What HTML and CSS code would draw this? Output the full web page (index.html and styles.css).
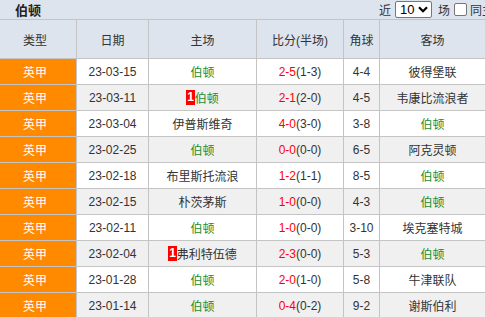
FILE: index.html
```html
<!DOCTYPE html>
<html lang="zh">
<head>
<meta charset="utf-8">
<link rel="stylesheet" href="styles.css">
</head>
<body>
<div class="wrap">
  <div class="topbar">
    <div class="title">伯顿</div>
    <div class="ctrl">
      <span class="lbl">近</span>
      <span class="sel"><span class="selv">10</span><svg class="chev" width="10" height="7" viewBox="0 0 10 7"><path d="M1 1.2 L5 5.2 L9 1.2" fill="none" stroke="#000" stroke-width="2.2"/></svg></span>
      <span class="lbl">场</span>
      <span class="chk"></span>
      <span class="lbl">同主客</span>
    </div>
  </div>
  <div class="grid">
    <div class="th c1">类型</div><div class="th">日期</div><div class="th">主场</div><div class="th">比分(半场)</div><div class="th">角球</div><div class="th">客场</div>

    <div class="lg">英甲</div><div class="td">23-03-15</div><div class="td g">伯顿</div><div class="td"><span class="r">2-5</span>(1-3)</div><div class="td">4-4</div><div class="td">彼得堡联</div>

    <div class="lg">英甲</div><div class="td z">23-03-11</div><div class="td z g"><span class="rc">1</span>伯顿</div><div class="td z"><span class="r">2-1</span>(2-0)</div><div class="td z">4-5</div><div class="td z">韦康比流浪者</div>

    <div class="lg">英甲</div><div class="td">23-03-04</div><div class="td">伊普斯维奇</div><div class="td"><span class="r">4-0</span>(3-0)</div><div class="td">3-8</div><div class="td g">伯顿</div>

    <div class="lg">英甲</div><div class="td z">23-02-25</div><div class="td z g">伯顿</div><div class="td z"><span class="r">0-0</span>(0-0)</div><div class="td z">6-5</div><div class="td z">阿克灵顿</div>

    <div class="lg">英甲</div><div class="td">23-02-18</div><div class="td">布里斯托流浪</div><div class="td"><span class="r">1-2</span>(1-1)</div><div class="td">8-5</div><div class="td g">伯顿</div>

    <div class="lg">英甲</div><div class="td z">23-02-15</div><div class="td z">朴茨茅斯</div><div class="td z"><span class="r">1-0</span>(0-0)</div><div class="td z">4-3</div><div class="td z g">伯顿</div>

    <div class="lg">英甲</div><div class="td">23-02-11</div><div class="td g">伯顿</div><div class="td"><span class="r">1-0</span>(0-0)</div><div class="td">3-10</div><div class="td">埃克塞特城</div>

    <div class="lg">英甲</div><div class="td z">23-02-04</div><div class="td z"><span class="rc">1</span>弗利特伍德</div><div class="td z"><span class="r">2-3</span>(0-0)</div><div class="td z">5-3</div><div class="td z g">伯顿</div>

    <div class="lg">英甲</div><div class="td">23-01-28</div><div class="td g">伯顿</div><div class="td"><span class="r">2-0</span>(1-0)</div><div class="td">5-8</div><div class="td">牛津联队</div>

    <div class="lg">英甲</div><div class="td z">23-01-14</div><div class="td z g">伯顿</div><div class="td z"><span class="r">0-4</span>(0-2)</div><div class="td z">9-2</div><div class="td z">谢斯伯利</div>
  </div>
</div>
</body>
</html>
```

FILE: styles.css
```css
html, body {
  margin: 0;
  padding: 0;
  overflow: hidden;
  background: #ffffff;
}
body {
  font-family: "Liberation Sans", "Noto Sans CJK SC", sans-serif;
  font-size: 12px;
  color: #333333;
}
.wrap {
  width: 485px;
  overflow: hidden;
}
.topbar {
  height: 19px;
  background: #dde4ee;
  display: flex;
  align-items: center;
  overflow: hidden;
}
.title {
  flex: 1;
  font-weight: bold;
  font-size: 13px;
  padding-left: 15px;
  color: #222;
}
.ctrl {
  flex: none;
  display: flex;
  align-items: center;
  margin-right: -21px;
}
.lbl {
  font-size: 12px;
  color: #333;
  white-space: nowrap;
}
.sel {
  box-sizing: border-box;
  width: 37px;
  height: 17px;
  margin: 0 6px 0 4px;
  padding: 0 3px 0 4px;
  border: 1px solid #767676;
  border-radius: 2px;
  background: #fff;
  display: flex;
  align-items: center;
  justify-content: space-between;
}
.selv {
  font-size: 13px;
  color: #000;
  font-family: "Liberation Sans", sans-serif;
}
.chev {
  display: block;
}
.chk {
  box-sizing: border-box;
  width: 13px;
  height: 13px;
  margin: 0 3px 0 4px;
  border: 1px solid #767676;
  border-radius: 2px;
  background: #fff;
}
.grid {
  display: grid;
  grid-template-columns: 76px 71px 107px 86px 35px 105px;
  grid-template-rows: 38px;
  grid-auto-rows: 25px;
  gap: 1px;
  background: #c4c4c4;
  border-top: 1px solid #c4c4c4;
}
.th {
  background: #dde4ee;
  display: flex;
  align-items: center;
  justify-content: center;
  color: #333;
}
.th.c1 {
  padding-right: 6px;
}
.lg {
  background: #ff8a00;
  color: #ffffff;
  display: flex;
  align-items: center;
  justify-content: center;
  padding-right: 6px;
}
.td {
  background: #ffffff;
  display: flex;
  align-items: center;
  justify-content: center;
  color: #333;
  white-space: nowrap;
}
.td.z {
  background: #f0f0f0;
}
.td.g {
  color: #2a8c1f;
}
.r {
  color: #ff0000;
}
.rc {
  background: #ff0000;
  color: #fff;
  font-weight: bold;
  font-size: 12px;
  line-height: 15px;
  padding: 0 1px;
}
```
